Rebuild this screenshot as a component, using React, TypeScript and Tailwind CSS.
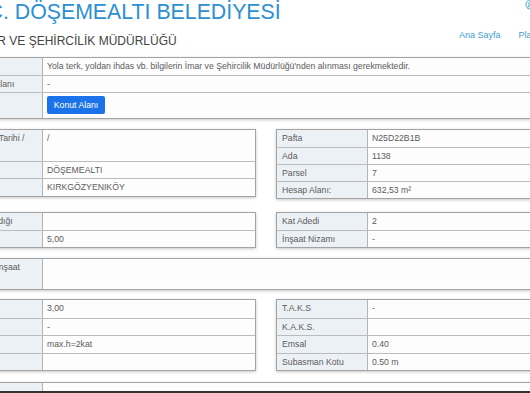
import { CircleUserRound } from "lucide-react";

type Row = {
  label?: React.ReactNode;
  value?: React.ReactNode;
  h: string;
  pad?: string;
};

const font = { fontFamily: '"Liberation Sans", Arial, sans-serif' };

const InfoTable = ({
  rows,
  labelW,
  labelPad = "pl-[5px]",
  className = "",
}: {
  rows: Row[];
  labelW: string;
  labelPad?: string;
  className?: string;
}) => (
  <div
    className={`border border-[#a3a3a3] bg-[#fdfdfd] shadow-[0_1px_3px_rgba(0,0,0,0.22)] ${className}`}
  >
    {rows.map((r, i) => (
      <div
        key={i}
        className={`flex ${r.h} ${i > 0 ? "border-t border-[#bcbcbc]" : ""}`}
      >
        <div
          className={`${labelW} ${r.pad ?? labelPad} shrink-0 bg-[#ecf1f5] border-r border-[#b3b3b3] pt-[3px] text-[8.7px] leading-[11px] text-[#5c5c5c] whitespace-nowrap overflow-hidden`}
        >
          {r.label}
        </div>
        <div className="flex-1 pl-[4px] pt-[3px] text-[8.7px] leading-[11px] text-[#5c5c5c] whitespace-nowrap overflow-hidden">
          {r.value}
        </div>
      </div>
    ))}
  </div>
);

export default function App() {
  return (
    <div
      className="w-[530px] h-[393px] bg-white flex flex-col overflow-hidden"
      style={font}
    >
      <div className="flex-1 min-h-0 overflow-hidden">
        <div className="-ml-[55px] w-[662px]">
          {/* Header */}
          <div className="flex">
            <div className="w-[514px] shrink-0">
              <h1 className="pl-[26px] text-[21.3px] leading-[25px] text-[#2b8fd3] whitespace-nowrap">
                T.C. DÖŞEMEALTI BELEDİYESİ
              </h1>
              <p className="pl-[31px] mt-[8px] text-[12px] leading-[16px] text-[#444] whitespace-nowrap">
                İMAR VE ŞEHİRCİLİK MÜDÜRLÜĞÜ
              </p>
            </div>
            <div className="flex flex-col">
              <div className="ml-[66px] h-[10px] text-[#3d9fcf]">
                <CircleUserRound className="w-[11px] h-[11px] -mt-[1px]" strokeWidth={2} />
              </div>
              <div className="mt-[20px] flex gap-[18px] text-[9px] leading-[10px] text-[#3d9fcf] whitespace-nowrap">
                <span>Ana Sayfa</span>
                <span>Plan Notları</span>
              </div>
            </div>
          </div>

          {/* Plan info */}
          <InfoTable
            className="mt-[8px]"
            labelW="w-[97px]"
            labelPad="pl-[3px]"
            rows={[
              {
                label: "Açıklama",
                value:
                  "Yola terk, yoldan ihdas vb. bilgilerin İmar ve Şehircilik Müdürlüğü'nden alınması gerekmektedir.",
                h: "h-[17px]",
              },
              {
                label: "Fonksiyon Alanı",
                value: "-",
                h: "h-[17px]",
                pad: "pl-[7px]",
              },
              {
                label: "Fonksiyon",
                value: (
                  <span className="inline-flex items-center justify-center w-[58px] h-[18px] rounded-[2px] bg-[#1a73e8] text-white text-[8.7px]">
                    Konut Alanı
                  </span>
                ),
                h: "h-[26px]",
              },
            ]}
          />

          {/* Location / parcel */}
          <div className="flex mt-[10px]">
            <InfoTable
              className="w-[311px] self-start"
              labelW="w-[97px]"
              labelPad="pl-[3px]"
              rows={[
                {
                  label: (
                    <>
                      Plan Onay Tarihi /<br />
                      No
                    </>
                  ),
                  value: "/",
                  h: "h-[31px]",
                  pad: "pl-[10px]",
                },
                { label: "İlçe", value: "DÖŞEMEALTI", h: "h-[17px]" },
                { label: "Mahalle", value: "KIRKGÖZYENIKÖY", h: "h-[18px]" },
              ]}
            />
            <InfoTable
              className="w-[311px] ml-[20px] self-start"
              labelW="w-[91px]"
              rows={[
                { label: "Pafta", value: "N25D22B1B", h: "h-[17px]" },
                { label: "Ada", value: "1138", h: "h-[17px]" },
                { label: "Parsel", value: "7", h: "h-[17px]" },
                { label: "Hesap Alanı:", value: "632,53 m²", h: "h-[17px]" },
              ]}
            />
          </div>

          {/* Front yard / floors */}
          <div className="flex mt-[13px]">
            <InfoTable
              className="w-[311px]"
              labelW="w-[97px]"
              labelPad="pl-[3px]"
              rows={[
                { label: "Ön Cephe Aldığı", value: "", h: "h-[17px]" },
                { label: "Ön Bahçe", value: "5,00", h: "h-[17px]" },
              ]}
            />
            <InfoTable
              className="w-[311px] ml-[20px]"
              labelW="w-[91px]"
              rows={[
                { label: "Kat Adedi", value: "2", h: "h-[17px]" },
                { label: "İnşaat Nizamı", value: "-", h: "h-[17px]" },
              ]}
            />
          </div>

          <InfoTable
            className="mt-[10px]"
            labelW="w-[97px]"
            labelPad="pl-[3px]"
            rows={[
              {
                label: (
                  <>
                    Arka Bahçe İnşaat
                    <br />
                    Durumu
                  </>
                ),
                value: "",
                h: "h-[30px]",
              },
            ]}
          />

          {/* Setbacks / ratios */}
          <div className="flex mt-[9px]">
            <InfoTable
              className="w-[311px]"
              labelW="w-[97px]"
              labelPad="pl-[3px]"
              rows={[
                { label: "Yan Bahçe", value: "3,00", h: "h-[18px]" },
                { label: "Arka Bahçe", value: "-", h: "h-[17px]" },
                { label: "Yükseklik", value: "max.h=2kat", h: "h-[18px]" },
                { label: "Saçak", value: "", h: "h-[17px]" },
              ]}
            />
            <InfoTable
              className="w-[311px] ml-[20px]"
              labelW="w-[91px]"
              rows={[
                { label: "T.A.K.S", value: "-", h: "h-[18px]" },
                { label: "K.A.K.S.", value: "", h: "h-[17px]" },
                { label: "Emsal", value: "0.40", h: "h-[18px]" },
                { label: "Subasman Kotu", value: "0.50 m", h: "h-[17px]" },
              ]}
            />
          </div>

          <InfoTable
            className="mt-[11px]"
            labelW="w-[97px]"
            labelPad="pl-[3px]"
            rows={[{ label: "Plan Notu", value: "-", h: "h-[17px]" }]}
          />
        </div>
      </div>
      <div className="h-[2px] bg-[#333]" />
    </div>
  );
}
